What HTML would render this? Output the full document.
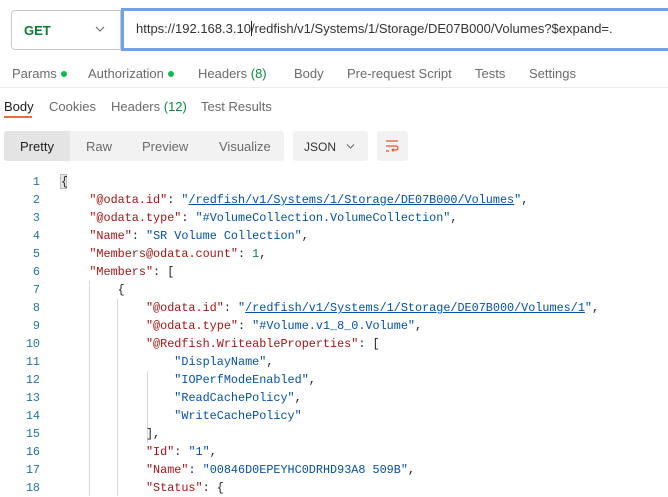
<!DOCTYPE html>
<html><head><style>
body{margin:0;width:668px;height:496px;overflow:hidden;background:#fff;font-family:"Liberation Sans",sans-serif;position:relative;color:#212121}
.a{position:absolute}
.t{font-size:13px;color:#6b6b6b;white-space:nowrap}
.dot{display:inline-block;width:6px;height:6px;border-radius:50%;background:#0cbb52;margin-left:4px;vertical-align:1px}
.code{position:absolute;left:0;top:173px;font-family:"Liberation Mono",monospace;font-size:11.8px;line-height:18px;white-space:pre}
.ln{position:absolute;left:0;width:40px;text-align:right;color:#237893}
.k{color:#a31515}.s{color:#0451a5}.n{color:#098658}.u{color:#0451a5;text-decoration:underline}
.g{position:absolute;width:1px;background:#d8d8d8}
</style></head><body>
<div class="a" style="left:11px;top:10px;width:110px;height:40px;border:1px solid #c8c8c8;border-radius:4px 0 0 4px;box-sizing:border-box"></div>
<div class="a" style="left:24px;top:23px;font-size:13px;font-weight:bold;color:#0c7a34">GET</div>
<svg class="a" style="left:95px;top:26px" width="10" height="6" viewBox="0 0 10 6" fill="none" stroke="#666" stroke-width="1"><path d="M1 1l4 4 4-4"/></svg>
<div class="a" style="left:121px;top:8px;width:560px;height:43px;border:3px solid #6ea3e8;box-sizing:border-box"></div>
<div class="a" style="left:136px;top:21px;font-size:13px;color:#333;white-space:nowrap">https://192.168.3.10<span style="border-left:1px solid #222;margin:0 -1px 0 0"></span>/redfish/v1/Systems/1/Storage/DE07B000/Volumes?$expand=.</div>
<div class="a t" style="left:12px;top:66px">Params<span class="dot"></span></div>
<div class="a t" style="left:88px;top:66px">Authorization<span class="dot"></span></div>
<div class="a t" style="left:198px;top:66px">Headers <span style="color:#0c8a3e">(8)</span></div>
<div class="a t" style="left:294px;top:66px">Body</div>
<div class="a t" style="left:347px;top:66px">Pre-request Script</div>
<div class="a t" style="left:475px;top:66px">Tests</div>
<div class="a t" style="left:529px;top:66px">Settings</div>
<div class="a" style="left:0;top:87px;width:668px;height:1px;background:#ececec"></div>
<div class="a t" style="left:4px;top:99px;color:#212121">Body</div>
<div class="a" style="left:4px;top:116px;width:28px;height:2px;background:#f26b3a"></div>
<div class="a t" style="left:49px;top:99px">Cookies</div>
<div class="a t" style="left:111px;top:99px">Headers <span style="color:#0c8a3e">(12)</span></div>
<div class="a t" style="left:201px;top:99px">Test Results</div>
<div class="a" style="left:4px;top:131px;width:280px;height:30px;background:#f2f2f2;border-radius:3px"></div>
<div class="a" style="left:4px;top:131px;width:66px;height:30px;background:#e4e4e4;border-radius:3px 0 0 3px"></div>
<div class="a t" style="left:20px;top:139px;color:#212121">Pretty</div>
<div class="a t" style="left:86px;top:139px">Raw</div>
<div class="a t" style="left:142px;top:139px">Preview</div>
<div class="a t" style="left:219px;top:139px">Visualize</div>
<div class="a" style="left:293px;top:131px;width:75px;height:30px;background:#f2f2f2;border-radius:3px"></div>
<div class="a" style="left:304px;top:140px;font-size:12px;color:#333">JSON</div>
<svg class="a" style="left:346px;top:144px" width="9" height="5" viewBox="0 0 9 5" fill="none" stroke="#666" stroke-width="1"><path d="M1 .5l3.5 3.5 3.5-3.5"/></svg>
<div class="a" style="left:377px;top:131px;width:31px;height:30px;background:#f2f2f2;border-radius:3px"></div>
<svg class="a" style="left:384px;top:138px" width="16" height="16" viewBox="0 0 16 16" fill="none" stroke="#e8542a" stroke-width="1.2"><path d="M2 3h12M2 8h10a2 2 0 0 1 0 4H8M9.5 10.5 8 12l1.5 1.5M2 13h3"/></svg>
<div class="g" style="left:89px;top:281px;height:215px"></div>
<div class="g" style="left:117px;top:299px;height:197px"></div>
<div class="g" style="left:147px;top:371px;height:72px"></div>
<div class="a" style="left:60px;top:174px;width:7px;height:15px;background:#e8e8e8;border:1px solid #bbb;box-sizing:border-box"></div>
<div class="code">
<span class="ln" style="top:0">1</span><span class="ln" style="top:18px">2</span><span class="ln" style="top:36px">3</span><span class="ln" style="top:54px">4</span><span class="ln" style="top:72px">5</span><span class="ln" style="top:90px">6</span><span class="ln" style="top:108px">7</span><span class="ln" style="top:126px">8</span><span class="ln" style="top:144px">9</span><span class="ln" style="top:162px">10</span><span class="ln" style="top:180px">11</span><span class="ln" style="top:198px">12</span><span class="ln" style="top:216px">13</span><span class="ln" style="top:234px">14</span><span class="ln" style="top:252px">15</span><span class="ln" style="top:270px">16</span><span class="ln" style="top:288px">17</span><span class="ln" style="top:306px">18</span><div style="position:absolute;left:61px;top:0">{
    <span class="k">"@odata.id"</span>: <span class="s">"</span><span class="u">/redfish/v1/Systems/1/Storage/DE07B000/Volumes</span><span class="s">"</span>,
    <span class="k">"@odata.type"</span>: <span class="s">"#VolumeCollection.VolumeCollection"</span>,
    <span class="k">"Name"</span>: <span class="s">"SR Volume Collection"</span>,
    <span class="k">"Members@odata.count"</span>: <span class="n">1</span>,
    <span class="k">"Members"</span>: [
        {
            <span class="k">"@odata.id"</span>: <span class="s">"</span><span class="u">/redfish/v1/Systems/1/Storage/DE07B000/Volumes/1</span><span class="s">"</span>,
            <span class="k">"@odata.type"</span>: <span class="s">"#Volume.v1_8_0.Volume"</span>,
            <span class="k">"@Redfish.WriteableProperties"</span>: [
                <span class="s">"DisplayName"</span>,
                <span class="s">"IOPerfModeEnabled"</span>,
                <span class="s">"ReadCachePolicy"</span>,
                <span class="s">"WriteCachePolicy"</span>
            ],
            <span class="k">"Id"</span>: <span class="s">"1"</span>,
            <span class="k">"Name"</span>: <span class="s">"00846D0EPEYHC0DRHD93A8 509B"</span>,
            <span class="k">"Status"</span>: {</div></div>
</body></html>
